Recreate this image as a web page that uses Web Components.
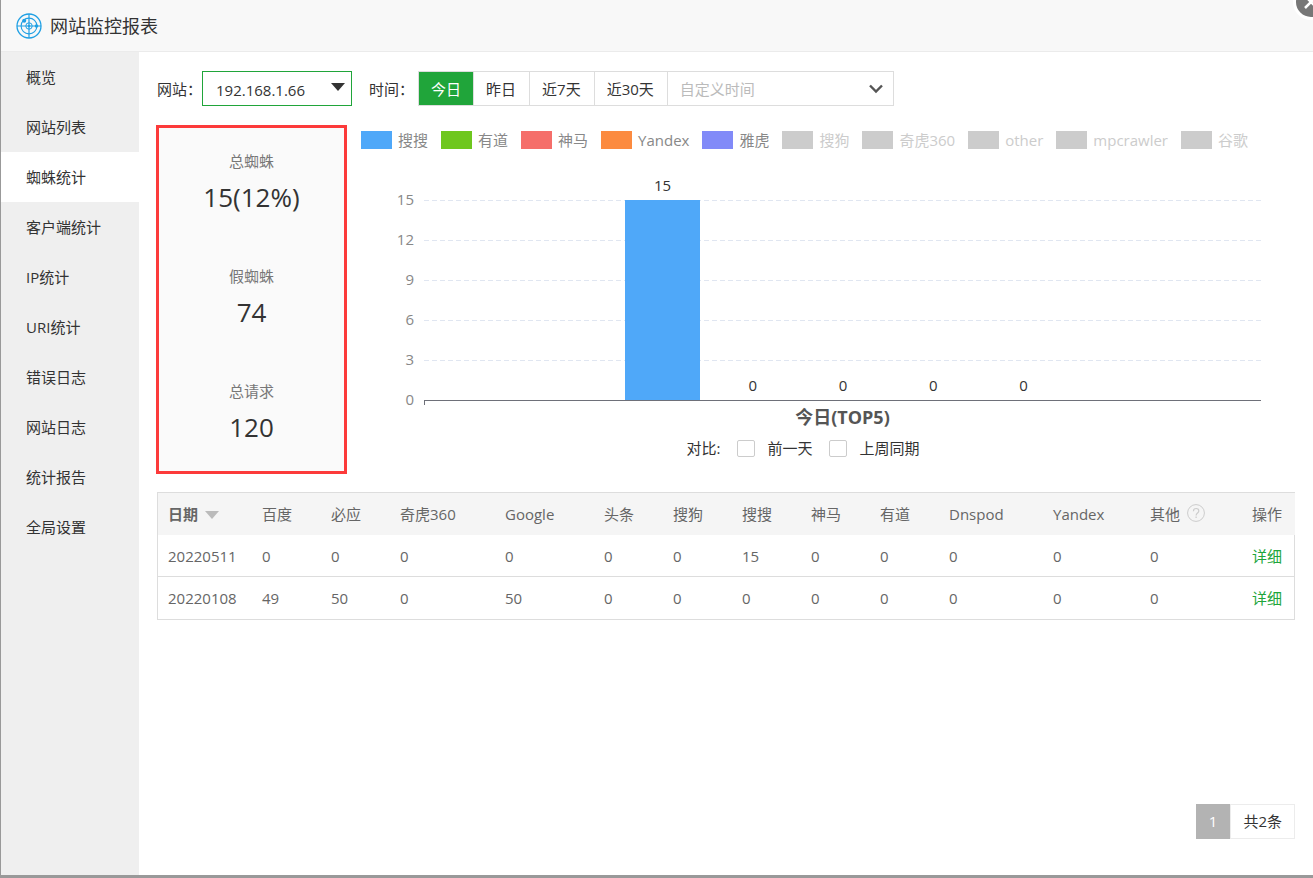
<!DOCTYPE html>
<html lang="zh-CN">
<head>
<meta charset="utf-8">
<title>网站监控报表</title>
<style>
    body {
        margin: 0;
        background: #999;
        color: #333;
        font: 15px/20px "Open Sans", "Noto Sans CJK SC", sans-serif;
    }
</style>
</head>
<body>
<report-window heading="网站监控报表">
    <side-menu slot="menu">
        <menu-item>概览</menu-item>
        <menu-item>网站列表</menu-item>
        <menu-item active>蜘蛛统计</menu-item>
        <menu-item>客户端统计</menu-item>
        <menu-item>IP统计</menu-item>
        <menu-item>URI统计</menu-item>
        <menu-item>错误日志</menu-item>
        <menu-item>网站日志</menu-item>
        <menu-item>统计报告</menu-item>
        <menu-item>全局设置</menu-item>
    </side-menu>
    <filter-bar></filter-bar>
    <spider-overview>
        <stat-item slot="stats" label="总蜘蛛">15(12%)</stat-item>
        <stat-item slot="stats" label="假蜘蛛">74</stat-item>
        <stat-item slot="stats" label="总请求">120</stat-item>
        <chart-legend></chart-legend>
        <bar-chart heading="今日(TOP5)" values="15,0,0,0,0" max="15" step="3"></bar-chart>
        <compare-options></compare-options>
    </spider-overview>
    <spider-table></spider-table>
    <page-nav slot="footer" page="1" total="2"></page-nav>
</report-window>

<script>
/**
 * Base commune : chaque élément rend son HTML dans un shadow root ouvert
 */
class BaseElement extends HTMLElement{

    connectedCallback(){
        if (this.shadowRoot) return
        this.attachShadow({mode:'open'}).innerHTML = this.render()
    }

}

class ReportWindow extends BaseElement{

    render(){
        return `
        <style>
            :host {
                display: grid;
                grid-template: 52px 1fr / 138px minmax(0, 1fr);
                box-sizing: border-box;
                min-height: 100vh;
                padding: 0 0 3px 1px;
                position: relative;
                overflow: hidden;
            }
            header {
                grid-column: 1 / 3;
                display: flex;
                align-items: center;
                gap: 8px;
                padding: 1px 15px 0;
                background: #f8f8f8;
                border-bottom: 1px solid #ebebeb;
            }
            h1 {
                margin: 0;
                font-size: 18px;
                font-weight: 400;
            }
            main {
                display: flex;
                flex-direction: column;
                background: #fff;
                padding: 19px 18px 36px;
            }
            ::slotted([slot=footer]) {
                margin-top: auto;
                align-self: flex-end;
            }
            .close {
                position: absolute;
                top: -16px;
                right: -16px;
                width: 36px;
                height: 36px;
                padding: 0;
                border: 0;
                background: none;
            }
            .close svg {
                display: block;
            }
        </style>
        <header>
            <svg width="26" height="26" viewBox="0 0 26 26" fill="none" stroke="#20a0e4" aria-hidden="true">
                <circle cx="13" cy="13" r="12" stroke-width="1.3"/>
                <circle cx="13" cy="13" r="7.9" stroke-width="1.1"/>
                <circle cx="13" cy="13" r="3.2" stroke-width="1"/>
                <path d="M13 1v24M1 13h24" stroke-width="1.2"/>
                <g fill="#20a0e4" stroke="none">
                    <circle cx="13" cy="13" r="1.3"/>
                    <circle cx="8.2" cy="7.8" r="2"/>
                    <circle cx="20.5" cy="13" r="1.8"/>
                </g>
            </svg>
            <h1>${this.getAttribute('heading')}</h1>
        </header>
        <slot name="menu"></slot>
        <main>
            <slot></slot>
            <slot name="footer"></slot>
        </main>
        <button class="close" type="button" aria-label="关闭">
            <svg width="36" height="36" viewBox="0 0 36 36">
                <circle cx="18" cy="18" r="18" fill="#fff"/>
                <circle cx="18" cy="18" r="15" fill="#777"/>
                <path d="M12 12l12 12M24 12l-12 12" stroke="#fff" stroke-width="2.5"/>
            </svg>
        </button>`
    }

}

class SideMenu extends BaseElement{

    render(){
        return `
        <style>
            :host {
                display: block;
                background: #efefef;
            }
        </style>
        <nav><slot></slot></nav>`
    }

}

class MenuItem extends BaseElement{

    render(){
        return `
        <style>
            :host {
                display: block;
            }
            :host([active]) {
                background: #fff;
            }
            a {
                display: block;
                padding: 0 25px;
                line-height: 50px;
                color: inherit;
                text-decoration: none;
            }
        </style>
        <a href="#"><slot></slot></a>`
    }

}

class FilterBar extends BaseElement{

    render(){
        return `
        <style>
            :host {
                display: flex;
                align-items: center;
            }
            .site {
                position: relative;
                margin-right: 17px;
            }
            select {
                appearance: none;
                display: block;
                width: 150px;
                height: 35px;
                padding: 2px 30px 0 13px;
                border: 1px solid #20a53a;
                border-radius: 0;
                background: #fff;
                color: inherit;
                font: inherit;
            }
            .site svg {
                position: absolute;
                right: 7px;
                top: 12px;
                pointer-events: none;
            }
            .range {
                display: flex;
                margin-left: 4px;
                border: 1px solid #ddd;
            }
            button {
                height: 33px;
                padding: 0 13px 0 12px;
                border: 0;
                border-right: 1px solid #ddd;
                background: #fff;
                color: inherit;
                font: inherit;
            }
            button.on {
                padding: 0 12px;
                background: #20a53a;
                color: #fff;
            }
            .custom {
                display: flex;
                align-items: center;
                justify-content: space-between;
                width: 225px;
                padding: 0 10px 0 12px;
                border: 0;
                color: #bbb;
            }
        </style>
        <label for="site">网站：</label>
        <div class="site">
            <select id="site"><option>192.168.1.66</option></select>
            <svg width="14" height="8" viewBox="0 0 14 8" aria-hidden="true"><path d="M0 0h14L7 8z" fill="#333"/></svg>
        </div>
        <span>时间：</span>
        <div class="range">
            <button type="button" class="on">今日</button>
            <button type="button">昨日</button>
            <button type="button">近7天</button>
            <button type="button">近30天</button>
            <button type="button" class="custom">自定义时间
                <svg width="14" height="10" viewBox="0 0 14 10" fill="none" stroke="#555" stroke-width="2.4" aria-hidden="true"><path d="M1 1.5l6 6 6-6"/></svg>
            </button>
        </div>`
    }

}

class SpiderOverview extends BaseElement{

    render(){
        return `
        <style>
            :host {
                display: flex;
                gap: 14px;
                margin: 19px 0 18px -1px;
            }
            .stats {
                flex: none;
                box-sizing: border-box;
                width: 191px;
                padding-top: 18px;
                border: 3px solid #fc3a3a;
                background: #fafafa;
            }
            .chart {
                flex: 1;
                min-width: 0;
            }
        </style>
        <div class="stats"><slot name="stats"></slot></div>
        <div class="chart"><slot></slot></div>`
    }

}

class StatItem extends BaseElement{

    render(){
        return `
        <style>
            :host {
                display: block;
                padding-bottom: 43px;
                text-align: center;
            }
            :host(:last-of-type) {
                padding-bottom: 23px;
            }
            .label {
                line-height: 30px;
                color: #777;
            }
            .value {
                font-size: 26px;
                line-height: 42px;
            }
        </style>
        <div class="label">${this.getAttribute('label')}</div>
        <div class="value"><slot></slot></div>`
    }

}

class ChartLegend extends BaseElement{

    render(){
        const series = [
            ['搜搜', '#4fa8f9'],
            ['有道', '#6ec71e'],
            ['神马', '#f56e6a'],
            ['Yandex', '#fc8b40'],
            ['雅虎', '#818af8'],
            ['搜狗'],
            ['奇虎360'],
            ['other'],
            ['mpcrawler'],
            ['谷歌']
        ]
        return `
        <style>
            :host {
                display: flex;
                flex-wrap: wrap;
                gap: 0 13px;
                padding-top: 6px;
                line-height: 18px;
                color: #888;
            }
            span {
                display: flex;
                gap: 6px;
            }
            i {
                width: 31px;
                height: 18px;
                background: #ccc;
            }
            .off {
                color: #ccc;
            }
        </style>
        ${series.map(([name, color]) => color
            ? `<span><i style="background:${color}"></i>${name}</span>`
            : `<span class="off"><i></i>${name}</span>`).join('')}`
    }

}

class BarChart extends BaseElement{

    /**
     * Construit les lignes de l'axe vertical, du maximum à zéro
     * @param {number} max Valeur maximale
     * @param {number} step Écart entre deux lignes
     */
    buildTicks(max, step){
        let html = ''
        for (let v = max; v >= 0; v -= step){
            html += `<div class="tick"><b>${v}</b>${v ? '<svg height="1"><line x2="100%" y1="0.5" y2="0.5"/></svg>' : '<hr>'}</div>`
        }
        return html
    }

    /**
     * Construit les barres
     * @param {number[]} values Valeurs
     * @param {number} max Valeur maximale
     */
    buildBars(values, max){
        return values.map(v => `<div class="bar"><span>${v}</span><i style="height:${v / max * 200}px"></i></div>`).join('')
    }

    render(){
        const max = Number(this.getAttribute('max'))
        const step = Number(this.getAttribute('step'))
        const values = this.getAttribute('values').split(',').map(Number)
        return `
        <style>
            :host {
                display: block;
                padding: 31px 34px 0 24px;
            }
            .plot {
                display: grid;
            }
            .axis, .bars {
                grid-area: 1 / 1;
            }
            .tick {
                display: flex;
                align-items: center;
                gap: 10px;
                height: 40px;
            }
            b {
                width: 29px;
                padding-bottom: 2px;
                text-align: right;
                font-weight: 400;
                color: #888;
            }
            svg {
                flex: 1;
                width: 0;
            }
            line {
                stroke: #e0e6f1;
                stroke-dasharray: 5 3;
            }
            hr {
                flex: 1;
                align-self: flex-end;
                height: 5px;
                margin: 0 0 15px;
                border: solid #6e7079;
                border-width: 1px 0 0 1px;
                box-sizing: border-box;
            }
            .bars {
                display: flex;
                justify-content: center;
                align-items: flex-end;
                gap: 15px;
                margin: 0 0 20px 40px;
            }
            .bar {
                flex: 0 0 9%;
                text-align: center;
                margin-top: -5px;
            }
            .bar span {
                display: block;
                padding-bottom: 5px;
            }
            .bar i {
                display: block;
                background: #4fa8f9;
            }
            h2 {
                margin: -13px 0 0 39px;
                text-align: center;
                font-size: 18px;
                line-height: 20px;
                color: #555;
            }
        </style>
        <div class="plot">
            <div class="axis">${this.buildTicks(max, step)}</div>
            <div class="bars">${this.buildBars(values, max)}</div>
        </div>
        <h2>${this.getAttribute('heading')}</h2>`
    }

}

class CompareOptions extends BaseElement{

    render(){
        return `
        <style>
            :host {
                display: flex;
                justify-content: center;
                align-items: center;
                padding: 11px 50px 0 0;
            }
            label {
                display: flex;
                align-items: center;
                gap: 12px;
                margin-left: 17px;
            }
            input {
                appearance: none;
                width: 18px;
                height: 17px;
                margin: 1px 0 0;
                border: 1px solid #ccc;
                border-radius: 2px;
                background: #fff;
            }
            input:checked {
                background: #20a53a;
            }
        </style>
        <span>对比:</span>
        <label><input type="checkbox">前一天</label>
        <label><input type="checkbox">上周同期</label>`
    }

}

class SpiderTable extends BaseElement{

    buildRow(row){
        return `<tr>${row.map(v => `<td>${v}</td>`).join('')}<td><a href="#">详细</a></td></tr>`
    }

    render(){
        const widths = [94, 69, 69, 105, 99, 69, 69, 69, 69, 69, 104, 97, 102, 53]
        const names = ['百度', '必应', '奇虎360', 'Google', '头条', '搜狗', '搜搜', '神马', '有道', 'Dnspod', 'Yandex']
        const rows = [
            ['20220511', 0, 0, 0, 0, 0, 0, 15, 0, 0, 0, 0, 0],
            ['20220108', 49, 50, 0, 50, 0, 0, 0, 0, 0, 0, 0, 0]
        ]
        return `
        <style>
            :host {
                display: block;
                border: 1px solid #ddd;
                color: #666;
            }
            table {
                width: 100%;
                table-layout: fixed;
                border-spacing: 0;
            }
            th, td {
                height: 42px;
                box-sizing: border-box;
                padding: 0 0 0 10px;
                text-align: left;
                font-weight: 400;
                white-space: nowrap;
            }
            th {
                background: #f5f5f5;
            }
            th:first-child {
                font-weight: 700;
            }
            tr:not(:last-child) td {
                border-bottom: 1px solid #ddd;
            }
            th svg {
                margin-left: 3px;
            }
            .help {
                vertical-align: -2px;
            }
            .sort {
                vertical-align: 1px;
            }
            a {
                color: #20a53a;
                text-decoration: none;
            }
        </style>
        <table>
            <colgroup>${widths.map(w => `<col style="width:${w}px">`).join('')}</colgroup>
            <thead>
                <tr>
                    <th>日期 <svg class="sort" width="14" height="8" viewBox="0 0 14 8" aria-hidden="true"><path d="M0 0h14L7 8z" fill="#bbb"/></svg></th>
                    ${names.map(n => `<th>${n}</th>`).join('')}
                    <th>其他 <svg class="help" width="18" height="18" viewBox="0 0 18 18" fill="none" stroke="#ccc" aria-hidden="true">
                        <circle cx="9" cy="9" r="8.4"/>
                        <path d="M6.4 7.2c0-3.6 5.4-3.5 5.4-.3 0 2.1-2.7 2-2.7 4.5M9.1 12.6v1.4" stroke-width="1.2"/>
                    </svg></th>
                    <th>操作</th>
                </tr>
            </thead>
            <tbody>${rows.map(this.buildRow).join('')}</tbody>
        </table>`
    }

}

class PageNav extends BaseElement{

    render(){
        return `
        <style>
            :host {
                display: flex;
                line-height: 33px;
            }
            a {
                padding: 1px 13px;
                background: #b3b3b3;
                color: #fff;
                text-decoration: none;
            }
            span {
                padding: 0 12px;
                border: 1px solid #ececec;
            }
        </style>
        <a href="#">${this.getAttribute('page')}</a>
        <span>共${this.getAttribute('total')}条</span>`
    }

}

customElements.define('report-window', ReportWindow)
customElements.define('side-menu', SideMenu)
customElements.define('menu-item', MenuItem)
customElements.define('filter-bar', FilterBar)
customElements.define('spider-overview', SpiderOverview)
customElements.define('stat-item', StatItem)
customElements.define('chart-legend', ChartLegend)
customElements.define('bar-chart', BarChart)
customElements.define('compare-options', CompareOptions)
customElements.define('spider-table', SpiderTable)
customElements.define('page-nav', PageNav)
</script>
</body>
</html>
